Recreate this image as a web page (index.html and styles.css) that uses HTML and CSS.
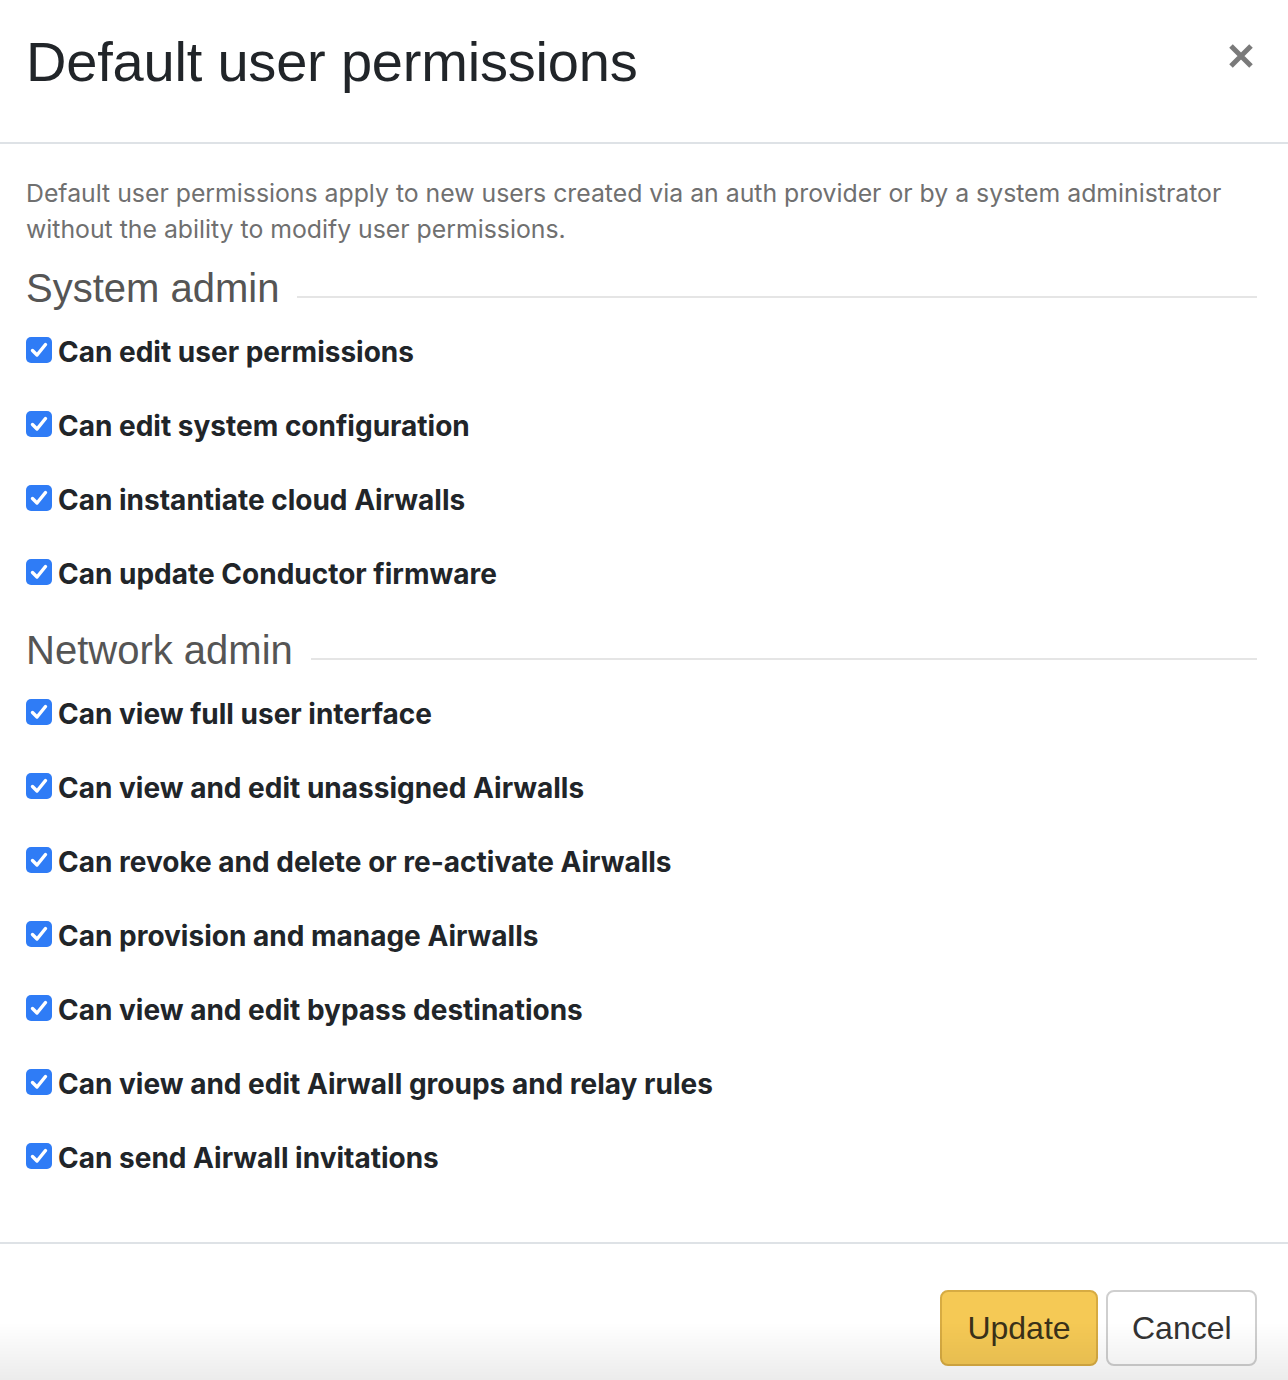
FILE: index.html
```html
<!DOCTYPE html>
<html lang="en">
<head>
<meta charset="utf-8">
<title>Default user permissions</title>
<link rel="stylesheet" href="styles.css">
</head>
<body>
<div class="modal">
  <header class="modal-header">
    <h1 class="modal-title">Default user permissions</h1>
    <button class="close" type="button" aria-label="Close">
      <svg width="26" height="26" viewBox="0 0 26 26"><path d="M3 3 L23 23 M23 3 L3 23" stroke="#7a7a7a" stroke-width="5" stroke-linecap="butt"/></svg>
    </button>
  </header>
  <main class="modal-body">
    <p class="desc">Default user permissions apply to new users created via an auth provider or by a system administrator without the ability to modify user permissions.</p>

    <section class="group">
      <div class="group-title"><h2>System admin</h2><span class="rule"></span></div>
      <ul class="perm-list">
        <li class="perm"><span class="cb"><svg viewBox="0 0 26 26" width="26" height="26"><path d="M6.5 13.5 L11 18 L19.5 7.5" fill="none" stroke="#fff" stroke-width="3.4" stroke-linecap="round" stroke-linejoin="round"/></svg></span>Can edit user permissions</li>
        <li class="perm"><span class="cb"><svg viewBox="0 0 26 26" width="26" height="26"><path d="M6.5 13.5 L11 18 L19.5 7.5" fill="none" stroke="#fff" stroke-width="3.4" stroke-linecap="round" stroke-linejoin="round"/></svg></span>Can edit system configuration</li>
        <li class="perm"><span class="cb"><svg viewBox="0 0 26 26" width="26" height="26"><path d="M6.5 13.5 L11 18 L19.5 7.5" fill="none" stroke="#fff" stroke-width="3.4" stroke-linecap="round" stroke-linejoin="round"/></svg></span>Can instantiate cloud Airwalls</li>
        <li class="perm"><span class="cb"><svg viewBox="0 0 26 26" width="26" height="26"><path d="M6.5 13.5 L11 18 L19.5 7.5" fill="none" stroke="#fff" stroke-width="3.4" stroke-linecap="round" stroke-linejoin="round"/></svg></span>Can update Conductor firmware</li>
      </ul>
    </section>

    <section class="group">
      <div class="group-title"><h2>Network admin</h2><span class="rule"></span></div>
      <ul class="perm-list">
        <li class="perm"><span class="cb"><svg viewBox="0 0 26 26" width="26" height="26"><path d="M6.5 13.5 L11 18 L19.5 7.5" fill="none" stroke="#fff" stroke-width="3.4" stroke-linecap="round" stroke-linejoin="round"/></svg></span>Can view full user interface</li>
        <li class="perm"><span class="cb"><svg viewBox="0 0 26 26" width="26" height="26"><path d="M6.5 13.5 L11 18 L19.5 7.5" fill="none" stroke="#fff" stroke-width="3.4" stroke-linecap="round" stroke-linejoin="round"/></svg></span>Can view and edit unassigned Airwalls</li>
        <li class="perm"><span class="cb"><svg viewBox="0 0 26 26" width="26" height="26"><path d="M6.5 13.5 L11 18 L19.5 7.5" fill="none" stroke="#fff" stroke-width="3.4" stroke-linecap="round" stroke-linejoin="round"/></svg></span>Can revoke and delete or re-activate Airwalls</li>
        <li class="perm"><span class="cb"><svg viewBox="0 0 26 26" width="26" height="26"><path d="M6.5 13.5 L11 18 L19.5 7.5" fill="none" stroke="#fff" stroke-width="3.4" stroke-linecap="round" stroke-linejoin="round"/></svg></span>Can provision and manage Airwalls</li>
        <li class="perm"><span class="cb"><svg viewBox="0 0 26 26" width="26" height="26"><path d="M6.5 13.5 L11 18 L19.5 7.5" fill="none" stroke="#fff" stroke-width="3.4" stroke-linecap="round" stroke-linejoin="round"/></svg></span>Can view and edit bypass destinations</li>
        <li class="perm"><span class="cb"><svg viewBox="0 0 26 26" width="26" height="26"><path d="M6.5 13.5 L11 18 L19.5 7.5" fill="none" stroke="#fff" stroke-width="3.4" stroke-linecap="round" stroke-linejoin="round"/></svg></span>Can view and edit Airwall groups and relay rules</li>
        <li class="perm"><span class="cb"><svg viewBox="0 0 26 26" width="26" height="26"><path d="M6.5 13.5 L11 18 L19.5 7.5" fill="none" stroke="#fff" stroke-width="3.4" stroke-linecap="round" stroke-linejoin="round"/></svg></span>Can send Airwall invitations</li>
      </ul>
    </section>
  </main>
  <footer class="modal-footer">
    <button class="btn btn-primary" type="button">Update</button>
    <button class="btn btn-default" type="button">Cancel</button>
  </footer>
</div>
<div class="fade-bottom"></div>
</body>
</html>
```

FILE: styles.css
```css
* { box-sizing: border-box; }

html, body {
  margin: 0;
  padding: 0;
  background: #fff;
}

body {
  font-family: Inter, "Liberation Sans", Arial, sans-serif;
  color: #212529;
}

.modal {
  width: 1288px;
}

.modal-header {
  height: 144px;
  display: flex;
  align-items: flex-start;
  justify-content: space-between;
  padding: 28px 34px 0 26px;
  border-bottom: 2px solid #dee2e6;
}

.modal-title {
  margin: 0;
  font-family: "Liberation Sans", Arial, sans-serif;
  font-weight: 400;
  font-size: 56px;
  line-height: 68px;
  letter-spacing: -0.2px;
  color: #212529;
}

.close {
  margin-top: 15px;
  padding: 0;
  border: 0;
  background: transparent;
  width: 26px;
  height: 26px;
  cursor: pointer;
}

.close svg { display: block; }

.modal-body {
  padding: 31px 31px 66px 26px;
}

.desc {
  margin: 0;
  font-size: 24.8px;
  line-height: 36px;
  color: #707070;
}

.group-title {
  display: flex;
  align-items: flex-start;
  margin: 17px 0 22px;
}

.group + .group .group-title {
  margin-top: 34px;
}

.group-title h2 {
  margin: 0;
  font-family: "Liberation Sans", Arial, sans-serif;
  font-weight: 400;
  font-size: 40px;
  line-height: 48px;
  color: #555;
}

.rule {
  flex: 1;
  height: 2px;
  margin: 32px 0 0 18px;
  background: #e5e5e5;
}

.perm-list {
  list-style: none;
  margin: 0;
  padding: 0;
  display: flex;
  flex-direction: column;
  gap: 38px;
}

.perm {
  display: flex;
  align-items: center;
  height: 36px;
  font-size: 28px;
  font-weight: 700;
  color: #212529;
}

.cb {
  width: 26px;
  height: 26px;
  flex: none;
  margin-right: 6px;
  margin-top: -4px;
  border-radius: 5px;
  background: #2f7cf6;
}

.cb svg { display: block; }

.modal-footer {
  display: flex;
  justify-content: flex-end;
  gap: 8px;
  padding: 46px 31px 20px 26px;
  border-top: 2px solid #dee2e6;
}

.btn {
  height: 76px;
  padding: 0 24px;
  border-radius: 8px;
  border: 2px solid #ccc;
  font-family: "Liberation Sans", Arial, sans-serif;
  font-size: 32px;
  cursor: pointer;
}

.btn-primary {
  width: 158px;
  background: #f5c955;
  border-color: #d7ab42;
  color: #3a3119;
}

.btn-default {
  width: 151px;
  background: #fff;
  border-color: #cfcfcf;
  color: #333;
}

.fade-bottom {
  position: fixed;
  left: 0;
  right: 0;
  bottom: 0;
  height: 58px;
  pointer-events: none;
  background: linear-gradient(to bottom, rgba(0, 0, 0, 0), rgba(0, 0, 0, 0.075));
}
```
